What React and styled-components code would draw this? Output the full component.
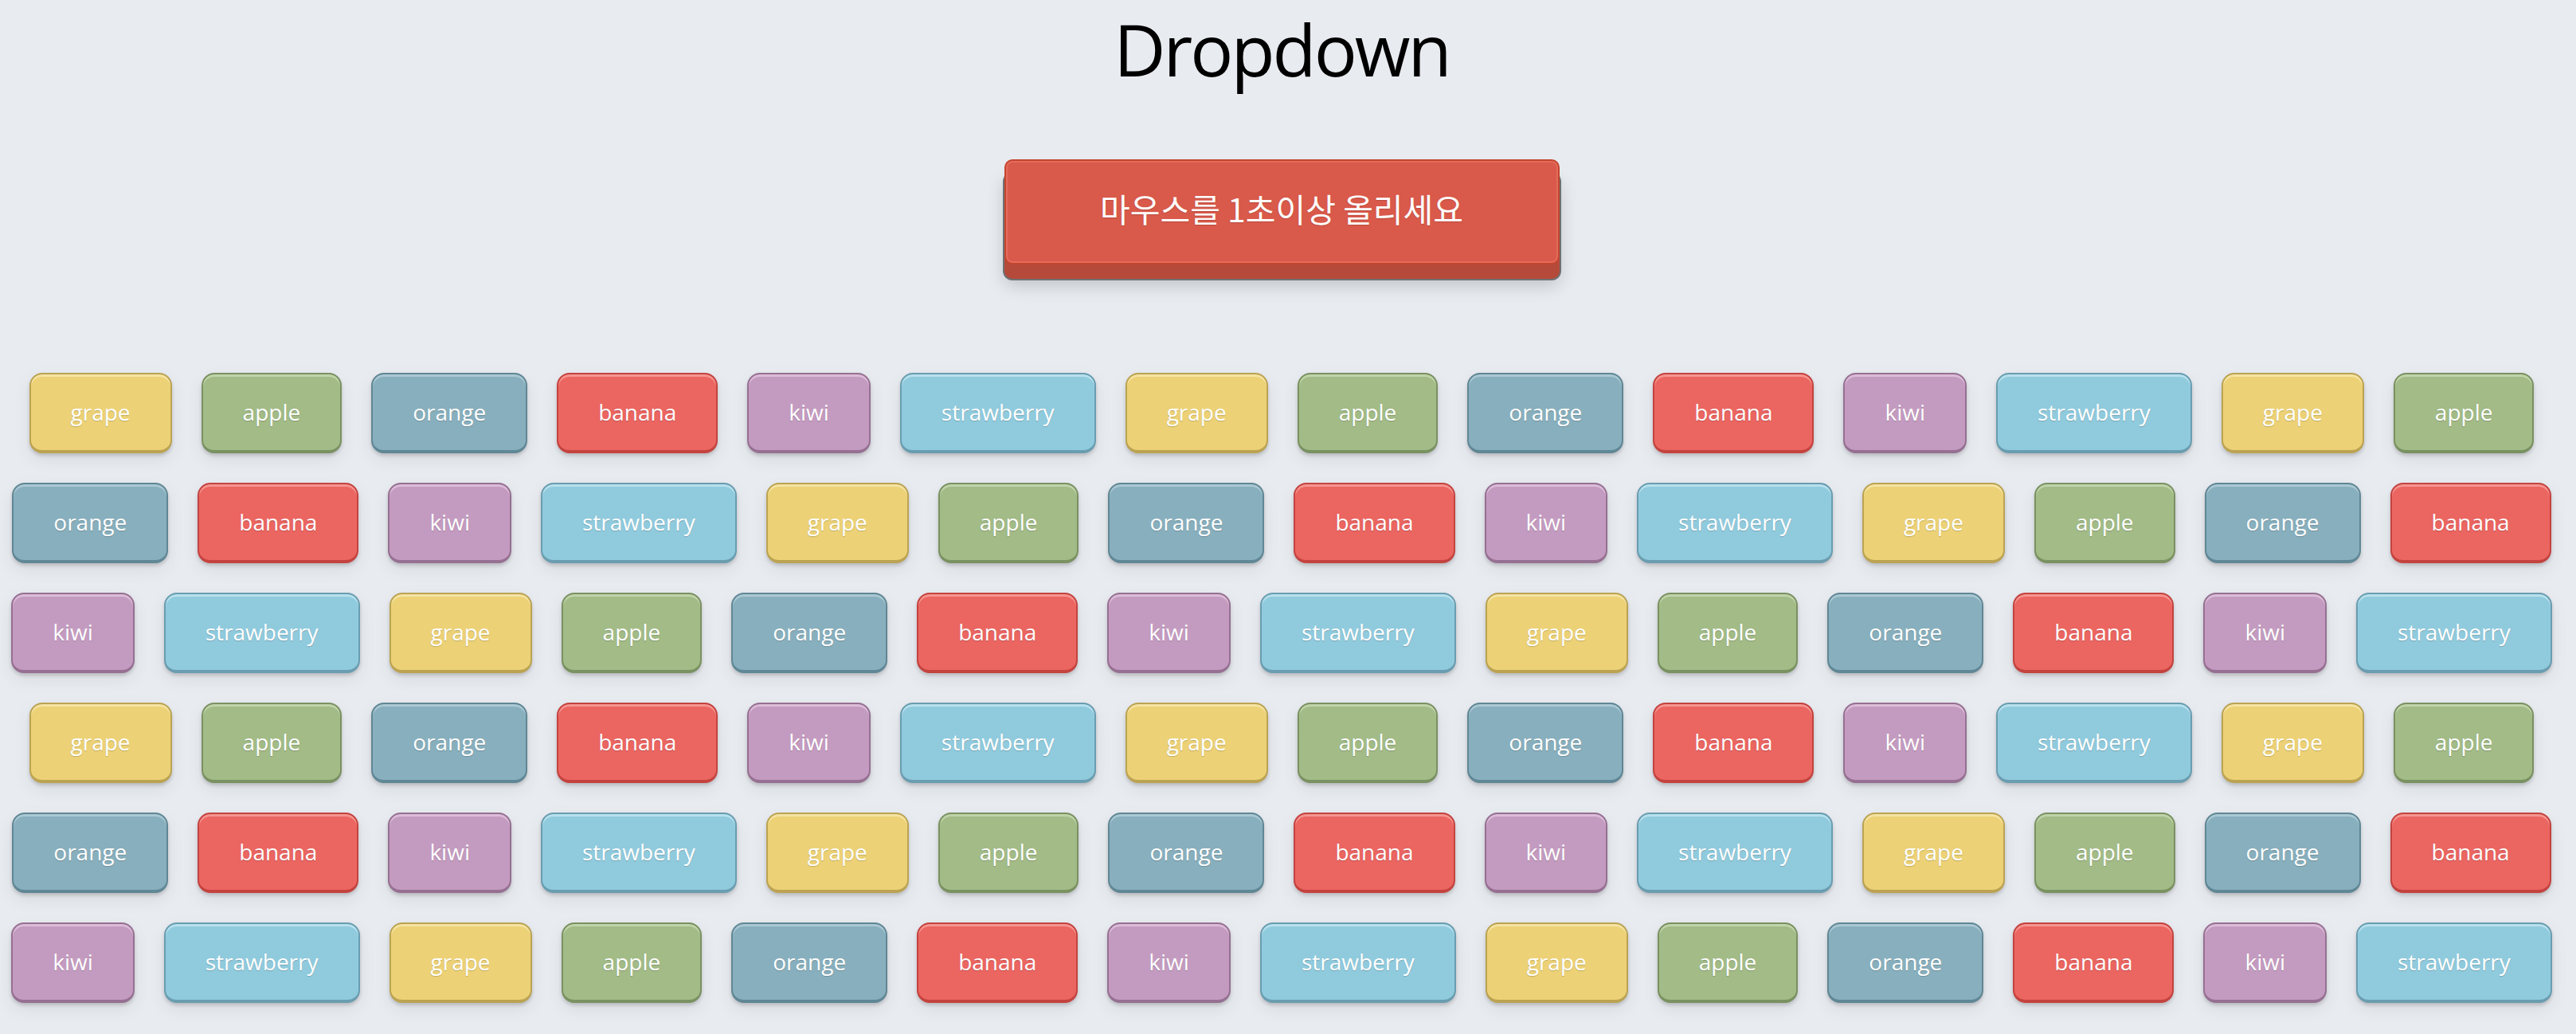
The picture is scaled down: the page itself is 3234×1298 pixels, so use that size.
import React from "react";
import styled, { createGlobalStyle } from "styled-components";

const Global = createGlobalStyle`
  html, body {
    margin: 0;
    padding: 0;
    background: #e8ebf0;
  }
  body {
    font-family: "Open Sans", "Noto Sans CJK KR", sans-serif;
  }
`;

const Page = styled.main`
  display: flex;
  flex-direction: column;
  align-items: center;
  box-sizing: border-box;
  width: 3234px;
  padding-right: 16px;
  min-height: 1298px;
`;

const Title = styled.h1`
  margin: 7px 0 0;
  height: 108px;
  font-family: "Open Sans", sans-serif;
  font-weight: 400;
  font-size: 90px;
  line-height: 108px;
  letter-spacing: -3px;
  color: #000;
`;

const HoverButton = styled.button`
  margin-top: 85px;
  width: 697px;
  height: 132px;
  box-sizing: border-box;
  padding: 0 0 10px;
  border: 2px solid #c4452f;
  border-radius: 10px;
  background: #d9594a;
  color: #fff;
  font-family: "Noto Sans CJK KR", sans-serif;
  font-size: 41px;
  font-weight: 400;
  text-shadow: 0 1px 1px rgba(0, 0, 0, 0.15);
  cursor: pointer;
  box-shadow:
    inset 0 0 0 2px #e46c5c,
    0 18px 0 0 #b54a3a,
    0 18px 0 2px #6f7173,
    0 26px 22px rgba(0, 0, 0, 0.18);
`;

const TagCloud = styled.div`
  margin-top: 136px;
  width: 100%;
  display: flex;
  flex-wrap: wrap;
  justify-content: center;
  column-gap: 37px;
  row-gap: 37px;
`;

const palette = {
  grape: { bg: "#ecd176", border: "#bba352", light: "#f5e3a2" },
  apple: { bg: "#a2bb87", border: "#7a9161", light: "#c0d3aa" },
  orange: { bg: "#88afbd", border: "#608795", light: "#aac8d3" },
  banana: { bg: "#eb6561", border: "#c4433f", light: "#f59590" },
  kiwi: { bg: "#c49bc0", border: "#967092", light: "#dbbcd8" },
  strawberry: { bg: "#90cadd", border: "#6a9db0", light: "#b7e0ed" },
};

const Tag = styled.span`
  display: inline-flex;
  align-items: center;
  justify-content: center;
  box-sizing: border-box;
  height: 101px;
  padding: 0 50px 2px;
  border: 2px solid ${(p) => palette[p.$fruit].border};
  border-bottom-width: 4px;
  border-radius: 16px;
  background: ${(p) => palette[p.$fruit].bg};
  color: #fff;
  font-family: "Open Sans", sans-serif;
  font-size: 28px;
  line-height: 1;
  text-shadow: 0 1px 1px rgba(0, 0, 0, 0.18);
  box-shadow:
    inset 0 3px 0 ${(p) => palette[p.$fruit].light},
    0 3px 4px rgba(0, 0, 0, 0.16),
    0 8px 22px rgba(0, 0, 0, 0.07);
`;

const fruits = ["grape", "apple", "orange", "banana", "kiwi", "strawberry"];
const items = Array.from({ length: 84 }, (_, i) => fruits[i % fruits.length]);

export default function App() {
  return (
    <>
      <Global />
      <Page>
        <Title>Dropdown</Title>
        <HoverButton type="button">마우스를 1초이상 올리세요</HoverButton>
        <TagCloud>
          {items.map((f, i) => (
            <Tag key={i} $fruit={f}>
              {f}
            </Tag>
          ))}
        </TagCloud>
      </Page>
    </>
  );
}
